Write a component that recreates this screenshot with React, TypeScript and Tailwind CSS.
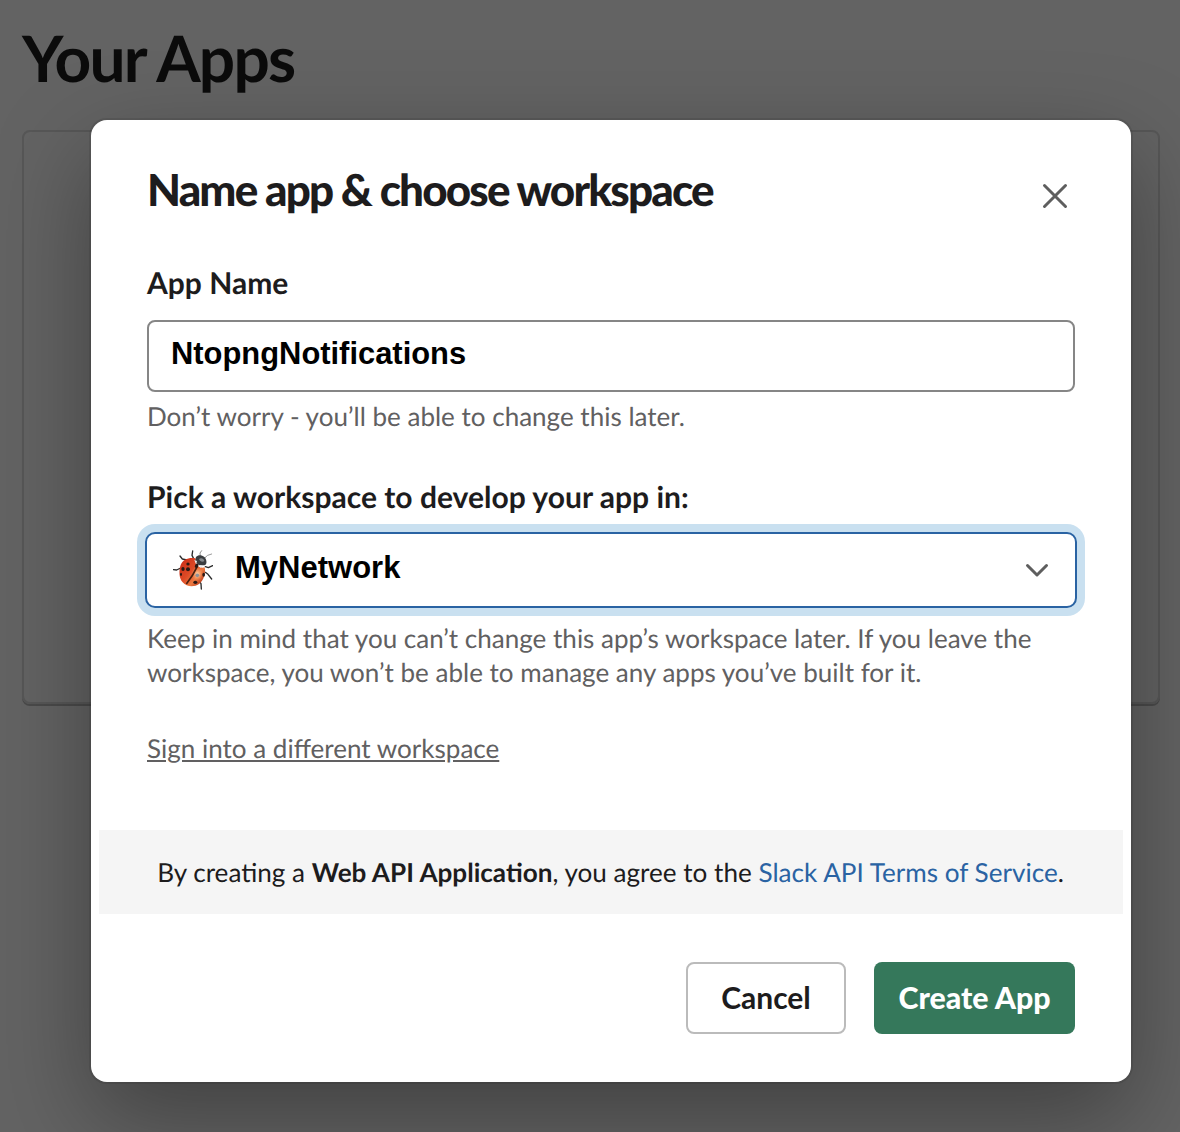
import { ChangeEvent, useState } from "react";

function LadybugIcon() {
  return (
    <svg viewBox="39 30 120 120" className="h-10 w-10 shrink-0" fill="none">
      <defs>
        <linearGradient id="shell" x1="0.1" y1="0.2" x2="0.9" y2="0.9">
          <stop offset="0" stopColor="#d0341b" />
          <stop offset="0.4" stopColor="#de4a26" />
          <stop offset="0.7" stopColor="#ec7a42" />
          <stop offset="1" stopColor="#b83517" />
        </linearGradient>
        <radialGradient id="glow" cx="0.5" cy="0.5" r="0.5">
          <stop offset="0" stopColor="#ffdcae" />
          <stop offset="1" stopColor="#f59a5c" stopOpacity="0" />
        </radialGradient>
      </defs>
      <g stroke="#2b2b2b" strokeWidth="4" strokeLinecap="round" strokeLinejoin="round">
        <path d="M40 89l10 1 12-6" />
        <path d="M60 48l7 9 14 3" />
        <path d="M98 33l-2 13 6 12" />
        <path d="M136 80l9 3 13-6" />
        <path d="M136 97l8 6 11 14" />
        <path d="M117 123l6 8 1 16" />
        <path d="M121 49l-1-10 5-7" stroke="#777" strokeWidth="2.5" />
        <path d="M134 54l9-8 12-4" stroke="#888" strokeWidth="2.5" />
      </g>
      <path d="M108 51c7-9 23-7 29 5 4 9 3 18-4 20l-15 0-14-12z" fill="#3a3d40" />
      <path d="M117 57c6-5 14-2 16 6-5 5-14 1-16-6z" fill="#85898d" />
      <path d="M106 55c-18-4-38 3-44 20-6 16-5 41 6 52 12 14 34 15 49 5 14-9 21-33 17-50-7 2-15 1-20-4-6-5-9-12-8-23z" fill="url(#shell)" />
      <ellipse cx="112" cy="102" rx="18" ry="22" fill="url(#glow)" />
      <path d="M112 79c-9 19-18 34-33 53" stroke="#49200f" strokeWidth="5" />
      <path d="M103 60l8 3-3 9zM119 75l10 4-9 4z" fill="#eee" />
      <g fill="#2a1915">
        <ellipse cx="84" cy="72" rx="5" ry="4.5" />
        <ellipse cx="69" cy="87" rx="5" ry="6" />
        <ellipse cx="63" cy="103" rx="3" ry="5" />
        <ellipse cx="84" cy="88" rx="6" ry="6" />
        <ellipse cx="110" cy="77" rx="5" ry="7" transform="rotate(28 110 77)" />
        <ellipse cx="106" cy="127" rx="6" ry="5" />
        <ellipse cx="131" cy="104" rx="4" ry="6" />
      </g>
      <ellipse cx="112" cy="106" rx="5.5" ry="5.5" fill="#8f9298" />
    </svg>
  );
}

function BackgroundPage() {
  return (
    <div className="h-full w-full px-[22px] pt-6">
      <h1 className="h-[106px] text-[64px] leading-[68px] font-bold tracking-[-1.76px] text-[#0b0b0b]">Your Apps</h1>
      <div className="h-[574px] w-[1138px] rounded-lg border-2 border-[#575757] shadow-[0_2px_0_#4a4a4a]" />
    </div>
  );
}

export default function App() {
  const [name, setName] = useState("NtopngNotifications");

  return (
    <div className="relative h-[1132px] w-[1180px] overflow-hidden bg-[#636363] font-['Lato',sans-serif] text-[#1d1c1d] [text-rendering:geometricPrecision]">
      <BackgroundPage />
      <div
        role="dialog"
        aria-modal="true"
        className="absolute top-[120px] left-[91px] flex h-[962px] w-[1040px] flex-col rounded-2xl bg-white shadow-[0_0_0_2px_rgba(29,28,29,0.13),0_36px_96px_rgba(0,0,0,0.35)]"
      >
        <header className="flex items-start justify-between pt-10 pr-14 pl-14">
          <h2 className="h-[103px] text-[44px] leading-[60px] font-black tracking-[-1.84px] whitespace-nowrap">
            Name app &amp; choose workspace
          </h2>
          <button aria-label="Close" className="mt-[16px] p-[6px] text-[#5e5e5e]">
            <svg viewBox="0 0 28 28" className="h-7 w-7" fill="none" stroke="currentColor" strokeWidth="3" strokeLinecap="round">
              <path d="M3.5 3.5l21 21M24.5 3.5l-21 21" />
            </svg>
          </button>
        </header>

        <div className="flex flex-col px-14">
          <label htmlFor="app-name" className="h-[57px] text-[30px] leading-[40px] font-bold">App Name</label>
          <input
            id="app-name"
            value={name}
            onChange={(e: ChangeEvent<HTMLInputElement>) => setName(e.target.value)}
            className="h-[72px] w-full rounded-lg border-2 border-[#868686] bg-white px-[22px] pb-[5px] font-['Liberation_Sans',sans-serif] text-[30.9px] font-bold text-black outline-none"
          />
          <p className="mt-[7px] text-[26.04px] leading-[34px] text-[#616061]">
            Don’t worry - you’ll be able to change this later.
          </p>
          <p className="mt-11 h-[55px] text-[30.04px] leading-[40px] font-bold">
            Pick a workspace to develop your app in:
          </p>
          <button className="-mx-0.5 flex h-[76px] items-center rounded-[10px] border-2 border-[#2a63a3] bg-white pr-[26px] pl-[26px] shadow-[0_0_0_8px_#c9e0f0]">
            <LadybugIcon />
            <span className="ml-[22px] pb-[5px] font-['Liberation_Sans',sans-serif] text-[31px] leading-none font-bold text-black">
              MyNetwork
            </span>
            <svg viewBox="0 0 24 16" className="ml-auto h-4 w-6 text-[#5e5e5e]" fill="none" stroke="currentColor" strokeWidth="3" strokeLinecap="round" strokeLinejoin="round">
              <path d="M2.5 3.5l9.5 9.5 9.5-9.5" />
            </svg>
          </button>
          <p className="mt-[13px] text-[26.04px] leading-[34px] whitespace-nowrap text-[#616061]">
            Keep in mind that you can’t change this app’s workspace later. If you leave the
            <br />
            workspace, you won’t be able to manage any apps you’ve built for it.
          </p>
          <a href="#" className="mt-[42px] self-start text-[26.04px] leading-[34px] text-[#616061] underline">
            Sign into a different workspace
          </a>
        </div>

        <p className="mx-2 mt-[65px] h-[84px] bg-[#f5f5f5] pr-px text-center text-[26.12px] leading-[84px] whitespace-nowrap">
          By creating a <strong className="font-bold">Web API Application</strong>, you agree to the{" "}
          <a href="#" className="text-[#2a63a3]">Slack API Terms of Service</a>.
        </p>

        <footer className="mt-12 flex justify-end gap-7 px-14">
          <button className="h-[72px] w-40 rounded-lg border-2 border-[#bbbbbb] bg-white pb-0.5 text-[30px] font-bold">Cancel</button>
          <button className="h-[72px] w-[201px] rounded-lg bg-[#35785b] text-[30.3px] font-black text-white">Create App</button>
        </footer>
      </div>
    </div>
  );
}
